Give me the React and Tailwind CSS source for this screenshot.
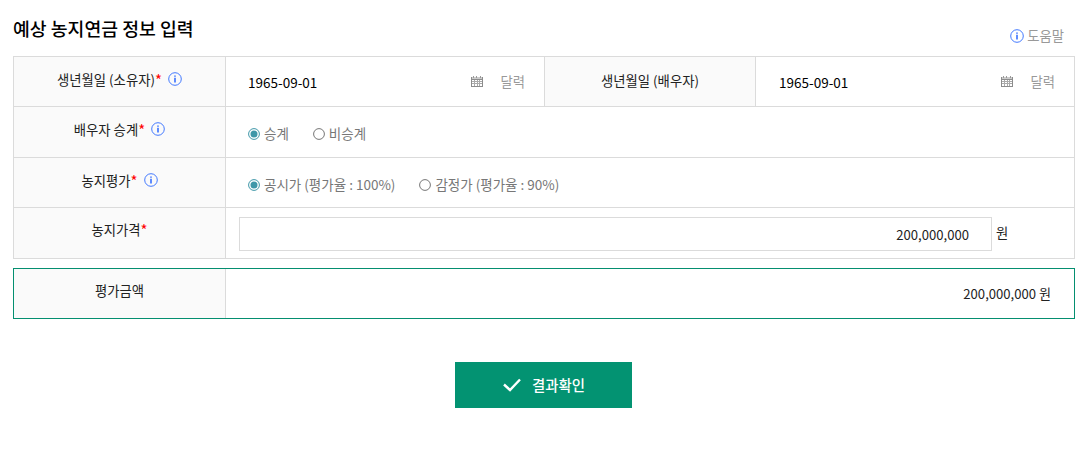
import { useState } from "react";

function InfoIcon({ className }) {
  return (
    <svg
      className={`shrink-0 ${className}`}
      width="14"
      height="14"
      viewBox="0 0 14 14"
      fill="none"
    >
      <circle cx="7" cy="7" r="6.3" stroke="#2f6bff" strokeWidth="0.9" />
      <path d="M7 3.4v1.4M7 5.8v4.6" stroke="#1c5cff" strokeWidth="1.4" />
    </svg>
  );
}

function CalendarIcon() {
  return (
    <svg
      className="shrink-0"
      width="12"
      height="11"
      viewBox="0 0 12 11"
      shapeRendering="crispEdges"
    >
      <path d="M0 1h12v3H0z" fill="#ccc" />
      <path d="M0 1h1v10H0zM11 1h1v10h-1zM0 10h12v1H0zM0 3h12v1H0z" fill="#8c8c8c" />
      <path d="M2 0h1v2H2zM5 0h1v2H5zM9 0h1v2H9z" fill="#999" />
      <path
        d="M3.5 4v6M6.5 4v6M8.5 4v6M1 5.5h10M1 7.5h10"
        stroke="#aaa"
        fill="none"
      />
    </svg>
  );
}

function HeadCell({ children, required, info, className = "" }) {
  return (
    <div
      className={`flex justify-center bg-[#fafafa] border-r border-[#dbdbdb] text-[#222] leading-5 ${className}`}
    >
      <span>{children}</span>
      {required && <span className="text-[15px] text-[#f00]">*</span>}
      {info && <InfoIcon className="ml-[6px] mt-[2px]" />}
    </div>
  );
}

function DateField({ value, className = "" }) {
  return (
    <div className={`flex items-center pl-[22px] pr-[19px] ${className}`}>
      <input
        className="w-0 grow text-[13.5px] text-black pt-[1px] outline-none"
        defaultValue={value}
      />
      <CalendarIcon />
      <button className="ml-[17px] text-[#999]">달력</button>
    </div>
  );
}

function Radio({ checked, onSelect, children }) {
  return (
    <button
      type="button"
      className="flex items-center text-[13.5px] text-[#777]"
      onClick={onSelect}
    >
      <svg className="mr-1" width="12" height="12" viewBox="0 0 12 12">
        <circle
          cx="6"
          cy="6"
          r="5.4"
          fill="#fff"
          stroke={checked ? "#3f97a8" : "#767676"}
        />
        {checked && <circle cx="6" cy="6" r="3.5" fill="#3f97a8" />}
      </svg>
      <span className="-mt-px leading-5">{children}</span>
    </button>
  );
}

function App() {
  const [succession, setSuccession] = useState(true);
  const [official, setOfficial] = useState(true);

  return (
    <div className="h-[473px] bg-white pl-[13px] pr-[9px] font-['Noto_Sans_CJK_KR','Noto_Sans',sans-serif] text-[13.33px] text-[#222]">
      <div className="flex h-14 justify-between pr-[11px]">
        <h3 className="pt-[15px] text-[18.3px] leading-[26px] font-medium text-black">
          예상 농지연금 정보 입력
        </h3>
        <div className="flex items-center pt-[16px] text-[#999]">
          <InfoIcon className="mr-[3px]" />
          도움말
        </div>
      </div>

      <div className="grid h-[203px] grid-rows-[50px_51px_50px_50px] border border-[#dbdbdb]">
        <div className="grid grid-cols-[212px_319px_211px_1fr] border-b border-[#dbdbdb]">
          <HeadCell required info className="pt-[13px]">
            생년월일 (소유자)
          </HeadCell>
          <DateField
            value="1965-09-01"
            className="border-r border-[#dbdbdb]"
          />
          <HeadCell className="pt-[14px]">생년월일 (배우자)</HeadCell>
          <DateField value="1965-09-01" className="pl-[23px]" />
        </div>

        <div className="grid grid-cols-[212px_1fr] border-b border-[#dbdbdb]">
          <HeadCell required info className="pt-[13px]">
            배우자 승계
          </HeadCell>
          <div className="flex items-center gap-6 pl-[22px] pt-[3px]">
            <Radio checked={succession} onSelect={() => setSuccession(true)}>
              승계
            </Radio>
            <Radio checked={!succession} onSelect={() => setSuccession(false)}>
              비승계
            </Radio>
          </div>
        </div>

        <div className="grid grid-cols-[212px_1fr] border-b border-[#dbdbdb]">
          <HeadCell required info className="pt-[13px]">
            농지평가
          </HeadCell>
          <div className="flex items-center gap-6 pl-[22px] pt-1">
            <Radio checked={official} onSelect={() => setOfficial(true)}>
              공시가 (평가율 : 100%)
            </Radio>
            <Radio checked={!official} onSelect={() => setOfficial(false)}>
              감정가 (평가율 : 90%)
            </Radio>
          </div>
        </div>

        <div className="grid grid-cols-[212px_1fr]">
          <HeadCell required className="pt-[12px]">
            농지가격
          </HeadCell>
          <div className="flex items-start pt-[9px] pl-[13px]">
            <input
              className="h-[34px] w-[753px] border border-[#dbdbdb] pt-[1px] pr-[22px] text-right text-[13.1px] outline-none"
              defaultValue="200,000,000"
            />
            <span className="ml-1 mt-[6px] leading-5">원</span>
          </div>
        </div>
      </div>

      <div className="mt-[9px] grid h-[51px] grid-cols-[212px_1fr] border border-[#048f70]">
        <HeadCell className="pt-[12px]">평가금액</HeadCell>
        <div className="flex items-center justify-end pr-[23px] text-[13.1px]">
          200,000,000 원
        </div>
      </div>

      <div className="mt-[43px] flex justify-center pr-[2px]">
        <button className="flex h-[46px] w-[177px] items-center justify-center bg-[#039372] pl-[2px] text-[14.4px] font-medium text-white">
          <svg
            className="mr-[11px]"
            width="18"
            height="14"
            viewBox="0 0 18 14"
            fill="none"
          >
            <path d="M1 6.5l6 5.5L17 1.5" stroke="#fff" strokeWidth="2.4" />
          </svg>
          결과확인
        </button>
      </div>
    </div>
  );
}

export default App;
